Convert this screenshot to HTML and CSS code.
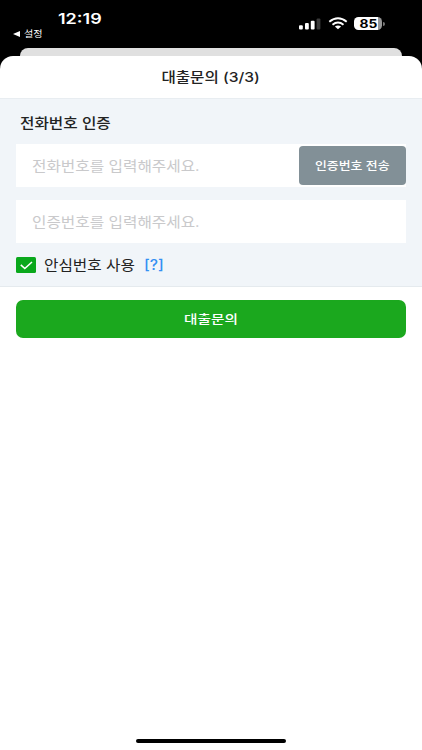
FILE: index.html
```html
<!DOCTYPE html>
<html lang="ko">
<head>
<meta charset="utf-8">
<title>대출문의</title>
<link rel="stylesheet" href="styles.css">
</head>
<body>
<header class="status">
  <div class="status-left">
    <div class="clock"><span class="wide">12:19</span></div>
    <div class="back">
      <svg width="7" height="6" viewBox="0 0 7 6"><path d="M0 3 7 0v6z" fill="#fff"/></svg>
      <span class="wide">설정</span>
    </div>
  </div>
  <div class="status-icons">
    <svg class="signal" width="22" height="12" viewBox="0 0 22 12">
      <rect x="0" y="7.2" width="3.8" height="4.3" rx="1" fill="#fff"/>
      <rect x="6" y="5" width="3.8" height="6.5" rx="1" fill="#fff"/>
      <rect x="11.8" y="2.7" width="3.8" height="8.8" rx="1" fill="#fff"/>
      <rect x="17.6" y="0.5" width="3.8" height="11" rx="1" fill="#3a3a3a"/>
    </svg>
    <svg class="wifi" width="20" height="13" viewBox="0 0 20 13" fill="none" stroke="#fff">
      <path d="M1.3 4.8Q10-2.2 18.7 4.8" stroke-width="1.9"/>
      <path d="M4.5 7.7Q10 3.2 15.5 7.7" stroke-width="1.9"/>
      <path d="M10 12.2 6.9 9.6Q10 7.4 13.1 9.6z" fill="#fff" stroke="none"/>
    </svg>
    <div class="battery"><span class="wide">85</span></div>
    <i class="battery-tip"></i>
  </div>
</header>
<div class="card-behind"></div>
<main class="sheet">
  <h1 class="title"><span class="wide">대출문의 (3/3)</span></h1>
  <section class="form">
    <h2 class="label"><span class="wide">전화번호 인증</span></h2>
    <div class="field">
      <span class="placeholder wide">전화번호를 입력해주세요.</span>
      <button class="send"><span class="wide">인증번호 전송</span></button>
    </div>
    <div class="field">
      <span class="placeholder wide">인증번호를 입력해주세요.</span>
    </div>
    <div class="check-row">
      <svg class="checkbox" width="20" height="16" viewBox="0 0 20 16">
        <rect width="20" height="16" rx="1.5" fill="#0aa81c"/>
        <path d="M4.8 7.9 8.8 11.5 16 5" fill="none" stroke="#fff" stroke-width="1.6"/>
      </svg>
      <span class="check-label wide">안심번호 사용</span>
      <span class="help wide">[?]</span>
    </div>
  </section>
  <div class="actions">
    <button class="submit"><span class="wide">대출문의</span></button>
  </div>
  <div class="home"></div>
</main>
</body>
</html>
```
FILE: styles.css
```css
* { box-sizing: border-box; }
body {
  margin: 0;
  width: 422px;
  height: 750px;
  overflow: hidden;
  display: flex;
  flex-direction: column;
  background: #000;
  color: #222;
  font-family: Inter, "Noto Sans CJK KR", sans-serif;
}
svg { display: block; }
button { border: 0; padding: 0; font-family: inherit; }
.wide { display: inline-block; white-space: nowrap; transform: scaleX(1.12); }

.status {
  height: 48px;
  flex: none;
  display: flex;
  justify-content: space-between;
  color: #fff;
}
.status-left { padding: 9px 0 0 13px; }
.clock { height: 18px; padding-left: 45px; font-size: 15px; line-height: 19px; font-weight: 600; }
.clock .wide { transform: scaleX(1.2); transform-origin: left; }
.back { display: flex; align-items: center; gap: 4px; height: 13px; font-size: 9px; line-height: 13px; }
.back .wide { transform-origin: left; }
.status-icons { display: flex; align-items: center; height: 13px; margin: 17px 37px 0 0; }
.wifi { margin-left: 7px; }
.battery {
  width: 28px;
  height: 13px;
  margin-left: 6px;
  border-radius: 4.5px;
  background: linear-gradient(90deg, #fff 85%, #999 85%);
  color: #000;
  font-size: 11.5px;
  line-height: 14px;
  font-weight: 700;
  text-align: center;
}
.battery .wide { height: 13px; line-height: 14px; vertical-align: top; transform: scaleX(1.2); }
.battery-tip { width: 2px; height: 4px; margin-left: 1px; border-radius: 0 2px 2px 0; background: #777; }

.card-behind { height: 8px; flex: none; margin: 0 20px; border-radius: 9px 9px 0 0; background: #e0e0e0; }
.sheet { flex: 1; display: flex; flex-direction: column; border-radius: 13px 13px 0 0; background: #fff; }
.title {
  height: 42px;
  margin: 0;
  font-size: 13.5px;
  line-height: 42px;
  font-weight: 500;
  text-align: center;
}
.title .wide { transform: scaleX(1.155); }
.form {
  height: 189px;
  padding: 14px 16px 0;
  border-top: 1px solid #e8edf1;
  border-bottom: 1px solid #e5eaee;
  background: #f1f5f9;
}
.label { height: 20px; margin: 0 0 11px 4px; font-size: 14px; line-height: 20px; font-weight: 500; }
.label .wide, .placeholder, .check-label, .help { transform-origin: left; }
.field {
  display: flex;
  align-items: center;
  justify-content: space-between;
  height: 43px;
  margin-bottom: 13px;
  padding-left: 16px;
  background: #fff;
}
.placeholder { color: #c9c9cb; font-size: 14px; line-height: 20px; }
.send {
  width: 107px;
  height: 39px;
  padding-bottom: 2px;
  border-radius: 4px;
  background: #829097;
  color: #fff;
  font-size: 11.5px;
  font-weight: 500;
}
.check-row { display: flex; align-items: center; height: 18px; font-size: 14px; line-height: 18px; }
.check-label { width: 92px; margin-left: 8px; }
.help { margin-left: 8px; color: #3490f3; font-weight: 500; }
.actions { padding: 13px 16px 0; }
.submit {
  display: block;
  width: 100%;
  height: 38px;
  padding-bottom: 2px;
  border-radius: 7px;
  background: #1ba81e;
  color: #fff;
  font-size: 12.5px;
  font-weight: 500;
}
.submit .wide { transform: scaleX(1.17); }
.home { width: 150px; height: 4px; margin: auto auto 7px; border-radius: 2px; background: #000; }
```
